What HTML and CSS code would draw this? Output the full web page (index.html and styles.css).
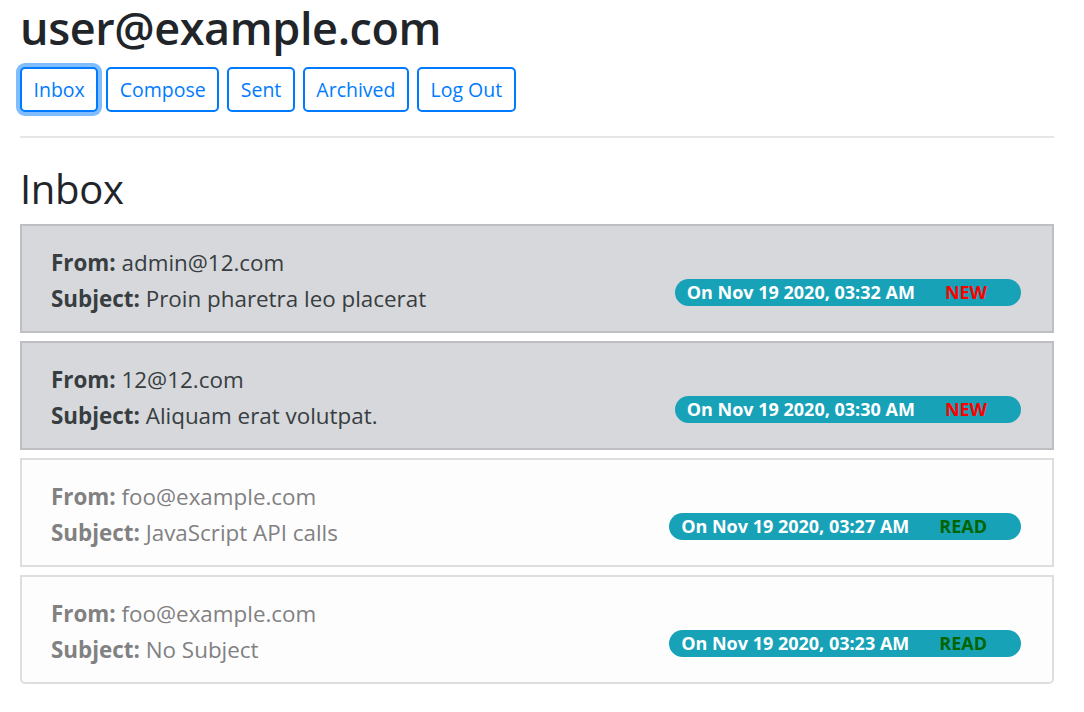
FILE: index.html
```html
<!DOCTYPE html>
<html lang="en">
<head>
<meta charset="utf-8">
<title>Mail</title>
<link rel="stylesheet" href="styles.css">
</head>
<body>
<div class="page">
  <h1 class="user">user@example.com</h1>
  <nav class="nav">
    <button class="btn focus">Inbox</button>
    <button class="btn">Compose</button>
    <button class="btn">Sent</button>
    <button class="btn">Archived</button>
    <button class="btn">Log Out</button>
  </nav>
  <hr class="rule">
  <h2 class="title">Inbox</h2>
  <div class="list">
    <div class="item unread">
      <div class="lines">
        <div><b>From:</b> admin@12.com</div>
        <div><b>Subject:</b> Proin pharetra leo placerat</div>
      </div>
      <span class="badge">On Nov 19 2020, 03:32 AM<span class="tag new">NEW</span></span>
    </div>
    <div class="item unread">
      <div class="lines">
        <div><b>From:</b> 12@12.com</div>
        <div><b>Subject:</b> Aliquam erat volutpat.</div>
      </div>
      <span class="badge">On Nov 19 2020, 03:30 AM<span class="tag new">NEW</span></span>
    </div>
    <div class="item read">
      <div class="lines">
        <div><b>From:</b> foo@example.com</div>
        <div><b>Subject:</b> JavaScript API calls</div>
      </div>
      <span class="badge">On Nov 19 2020, 03:27 AM<span class="tag old">READ</span></span>
    </div>
    <div class="item read last">
      <div class="lines">
        <div><b>From:</b> foo@example.com</div>
        <div><b>Subject:</b> No Subject</div>
      </div>
      <span class="badge">On Nov 19 2020, 03:23 AM<span class="tag old">READ</span></span>
    </div>
  </div>
</div>
</body>
</html>
```

FILE: styles.css
```css
html, body {
  margin: 0;
  padding: 0;
  background: #ffffff;
}
body {
  font-family: "Open Sans", "Noto Sans", sans-serif;
  color: #212529;
}
.page {
  padding: 0 30px 0 20px;
}
.user {
  font-size: 45px;
  font-weight: 600;
  line-height: 55px;
  margin: 0 0 12px 0;
  letter-spacing: -0.4px;
}
.nav {
  display: flex;
  gap: 8px;
}
.btn {
  font-family: inherit;
  font-size: 19.5px;
  height: 45px;
  padding: 0 11.5px;
  background: #fff;
  color: #007bff;
  border: 2px solid #007bff;
  border-radius: 5px;
}
.btn.focus {
  box-shadow: 0 0 0 4px rgba(0, 123, 255, 0.5);
}
.rule {
  border: 0;
  border-top: 2px solid #e6e6e6;
  margin: 24px 0 0 0;
}
.title {
  font-size: 40px;
  font-weight: 500;
  line-height: 50px;
  margin: 26px 0 10px 0;
  letter-spacing: -0.3px;
}
.list {
  display: flex;
  flex-direction: column;
  gap: 8px;
}
.item {
  height: 109px;
  box-sizing: border-box;
  display: flex;
  justify-content: space-between;
  align-items: flex-end;
  padding: 20px 31px 14px 29px;
  font-size: 22.4px;
  line-height: 36px;
}
.item b { font-weight: 700; }
.unread {
  background: #d6d8db;
  border: 2px solid #bdbfc2;
  color: #383d41;
}
.read {
  background: #fdfdfe;
  border: 2px solid #dedede;
  color: #818182;
}
.last {
  border-radius: 0 0 5px 5px;
}
.badge {
  display: flex;
  align-items: center;
  background: #17a2b8;
  color: #fff;
  font-weight: 700;
  font-size: 18px;
  height: 27px;
  line-height: 27px;
  border-radius: 14px;
  padding: 0 34px 0 12px;
  margin-bottom: 11px;
  letter-spacing: 0;
}
.tag {
  margin-left: 30px;
}
.new { color: #ff0000; }
.old { color: #006400; }
```
